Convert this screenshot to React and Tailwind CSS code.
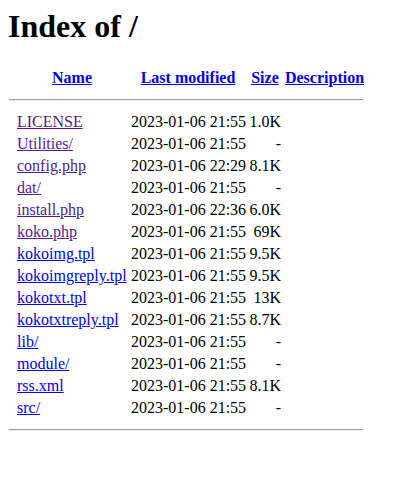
import React from "react";

const rows = [
  ["LICENSE", "2023-01-06 21:55", "1.0K", true],
  ["Utilities/", "2023-01-06 21:55", "-", true],
  ["config.php", "2023-01-06 22:29", "8.1K", true],
  ["dat/", "2023-01-06 21:55", "-", true],
  ["install.php", "2023-01-06 22:36", "6.0K", true],
  ["koko.php", "2023-01-06 21:55", "69K", true],
  ["kokoimg.tpl", "2023-01-06 21:55", "9.5K", false],
  ["kokoimgreply.tpl", "2023-01-06 21:55", "9.5K", false],
  ["kokotxt.tpl", "2023-01-06 21:55", "13K", false],
  ["kokotxtreply.tpl", "2023-01-06 21:55", "8.7K", false],
  ["lib/", "2023-01-06 21:55", "-", false],
  ["module/", "2023-01-06 21:55", "-", false],
  ["rss.xml", "2023-01-06 21:55", "8.1K", false],
  ["src/", "2023-01-06 21:55", "-", false],
];

function Hr() {
  return (
    <div className="ml-px w-[354px] h-[2px] border-t border-b border-t-[#9a9a9a] border-b-[#eeeeee]" />
  );
}

export default function App() {
  return (
    <div
      className="min-h-[495px] bg-white text-black pt-[8px] pl-[8px] text-[16px]"
      style={{ fontFamily: '"Liberation Serif", "Times New Roman", serif' }}
    >
      <h1 className="h-[37px] leading-[37px] text-[32px] font-bold whitespace-nowrap">Index of /</h1>

      <div className="mt-[23px] pl-[9px] grid grid-cols-[110px_114px_32px_79px] gap-x-[4px] h-[22px] pt-px leading-[18px] font-bold whitespace-nowrap">
        <div className="text-center"><a href="#" className="text-[#0000ee] underline">Name</a></div>
        <div className="text-center"><a href="#" className="text-[#0000ee] underline">Last modified</a></div>
        <div className="flex justify-center"><a href="#" className="text-[#0000ee] underline">Size</a></div>
        <div className="flex justify-center"><a href="#" className="text-[#0000ee] underline">Description</a></div>
      </div>

      <div className="mt-[9px]"><Hr /></div>

      <div className="mt-[11px] pl-[9px]">
        {rows.map(([name, date, size, visited]) => (
          <div
            key={name}
            className="grid grid-cols-[110px_114px_32px_79px] gap-x-[4px] h-[22px] pt-px leading-[18px] whitespace-nowrap"
          >
            <div>
              <a href="#" className={visited ? "text-[#551a8b] underline" : "text-[#0000ee] underline"}>
                {name}
              </a>
            </div>
            <div>{date}</div>
            <div className="text-right">{size}</div>
            <div></div>
          </div>
        ))}
      </div>

      <div className="mt-[9px]"><Hr /></div>
    </div>
  );
}
